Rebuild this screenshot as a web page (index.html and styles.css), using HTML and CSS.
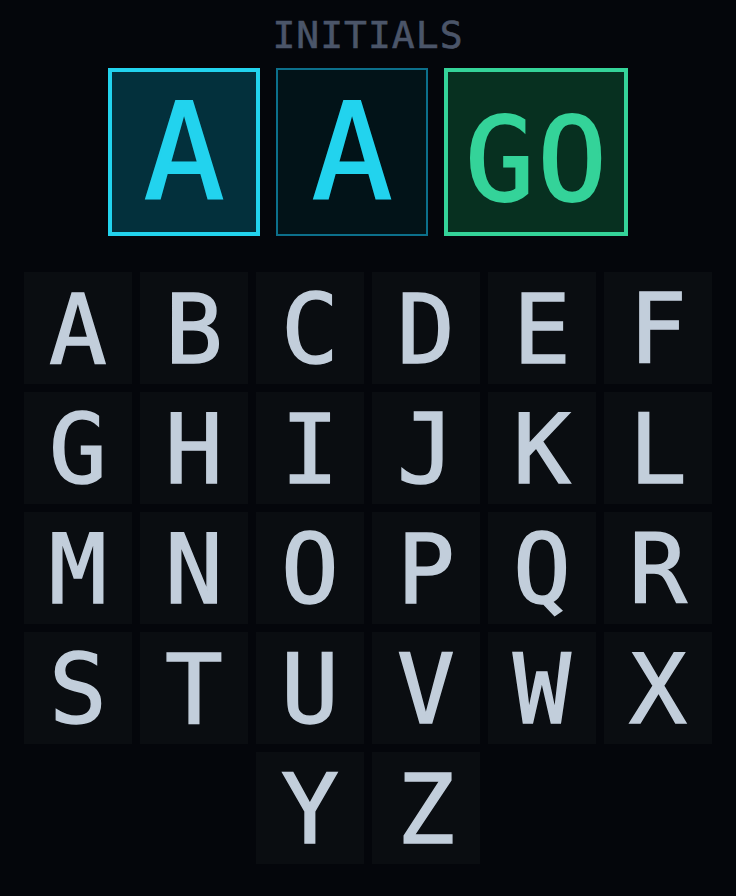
FILE: index.html
```html
<!DOCTYPE html>
<html lang="en">
<head>
<meta charset="utf-8">
<title>Initials</title>
<link rel="stylesheet" href="styles.css">
</head>
<body>
<main class="screen">
  <h1 class="title">INITIALS</h1>
  <div class="slots">
    <div class="slot slot-active">A</div>
    <div class="slot slot-filled">A</div>
    <div class="slot slot-go">GO</div>
  </div>
  <div class="keys">
    <div class="key">A</div>
    <div class="key">B</div>
    <div class="key">C</div>
    <div class="key">D</div>
    <div class="key">E</div>
    <div class="key">F</div>
    <div class="key">G</div>
    <div class="key">H</div>
    <div class="key">I</div>
    <div class="key">J</div>
    <div class="key">K</div>
    <div class="key">L</div>
    <div class="key">M</div>
    <div class="key">N</div>
    <div class="key">O</div>
    <div class="key">P</div>
    <div class="key">Q</div>
    <div class="key">R</div>
    <div class="key">S</div>
    <div class="key">T</div>
    <div class="key">U</div>
    <div class="key">V</div>
    <div class="key">W</div>
    <div class="key">X</div>
    <div class="key key-y">Y</div>
    <div class="key">Z</div>
  </div>
</main>
</body>
</html>
```
FILE: styles.css
```css
html, body {
  margin: 0;
  padding: 0;
  background: #04060b;
}

body {
  width: 736px;
  height: 896px;
  overflow: hidden;
  font-family: "DejaVu Sans Mono", "Liberation Mono", monospace;
}

.screen {
  display: flex;
  flex-direction: column;
  align-items: center;
}

.title {
  margin: 16px 0 0;
  font-size: 38px;
  line-height: 38px;
  font-weight: normal;
  letter-spacing: 1px;
  color: #4b5569;
  -webkit-text-stroke: 0.6px currentColor;
}

.slots {
  margin-top: 14px;
  display: flex;
  gap: 16px;
}

.slot {
  box-sizing: border-box;
  height: 168px;
  display: flex;
  align-items: center;
  justify-content: center;
  line-height: 1;
  -webkit-text-stroke: 2px currentColor;
}

.slot-active {
  width: 152px;
  border: 4px solid #22d3ee;
  background: #03303c;
  color: #22d3ee;
  font-size: 134px;
}

.slot-filled {
  width: 152px;
  border: 2px solid #0c6f8b;
  background: #021318;
  color: #22d3ee;
  font-size: 134px;
}

.slot-go {
  width: 184px;
  border: 4px solid #34d399;
  background: #073020;
  color: #34d399;
  font-size: 115px;
  letter-spacing: 3px;
  padding-top: 16px;
  padding-left: 3px;
}

.keys {
  margin-top: 36px;
  display: grid;
  grid-template-columns: repeat(6, 108px);
  grid-auto-rows: 112px;
  gap: 8px;
}

.key {
  background: #0a0d11;
  color: #c2cedb;
  font-size: 96px;
  line-height: 1;
  display: flex;
  align-items: center;
  justify-content: center;
  padding-top: 3px;
  box-sizing: border-box;
  -webkit-text-stroke: 1.5px currentColor;
}

.key-y {
  grid-column-start: 3;
}
```
